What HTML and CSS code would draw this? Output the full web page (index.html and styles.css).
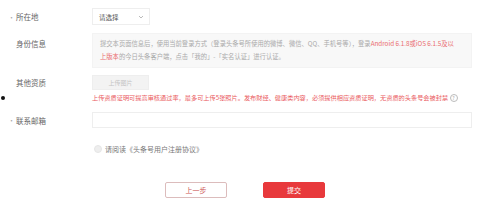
FILE: index.html
```html
<!DOCTYPE html>
<html>
<head>
  <title>头条号注册</title>
  <meta charset="UTF-8">
  <link rel="stylesheet" href="styles.css">
</head>
<body>
  <div class="form">
    <div class="row row-location">
      <div class="label"><span class="req">•</span>所在地</div>
      <div class="select">
        <span>请选择</span>
        <svg class="arrow" width="6" height="4" viewBox="0 0 6 4"><path d="M1 1 L3 3 L5 1" fill="none" stroke="#aaa" stroke-width="0.8"/></svg>
      </div>
    </div>

    <div class="row row-id">
      <div class="label"><span class="req"></span>身份信息</div>
      <div class="notice">
        <div class="line">提交本页面信息后，使用当前登录方式（登录头条号所使用的微博、微信、QQ、手机号等），登录<span class="red">Android 6.1.8或iOS 6.1.5及以</span></div>
        <div class="line"><span class="red">上版本</span>的今日头条客户端，点击「我的」-「实名认证」进行认证。</div>
      </div>
    </div>

    <div class="row row-upload">
      <div class="label"><span class="req"></span>其他资质</div>
      <button class="upload-btn">上传图片</button>
    </div>
    <div class="row row-hint">
      <div class="label label-dot"><span class="dot"></span></div>
      <div class="hint">上传资质证明可提高审核通过率，最多可上传5张照片。发布财经、健康类内容，必须提供相应资质证明，无资质的头条号会被封禁 <span class="help">?</span></div>
    </div>

    <div class="row row-email">
      <div class="label"><span class="req">•</span>联系邮箱</div>
      <div class="input"></div>
    </div>

    <div class="row row-agree">
      <div class="label"></div>
      <span class="radio"></span>
      <span class="agree-text">请阅读《头条号用户注册协议》</span>
    </div>

    <div class="actions">
      <button class="btn btn-prev">上一步</button>
      <button class="btn btn-submit">提交</button>
    </div>
  </div>
</body>
</html>
```

FILE: styles.css
```css
body {
  margin: 0;
  background: #fff;
  font-family: "Noto Sans CJK SC", "Noto Sans", sans-serif;
  color: #333;
}
.form {
  padding-top: 8px;
}
.row {
  display: flex;
  align-items: center;
}
.label {
  width: 92px;
  flex: none;
  padding-left: 8px;
  box-sizing: border-box;
  display: flex;
  align-items: center;
  font-size: 7.5px;
  color: #666;
}
.req {
  display: inline-block;
  width: 8px;
  color: #aaa;
  font-size: 7px;
}
.select {
  width: 58px;
  height: 17px;
  box-sizing: border-box;
  border: 1px solid #eee;
  display: flex;
  align-items: center;
  justify-content: space-between;
  padding: 0 5px 0 6px;
  font-size: 6.5px;
  color: #555;
}
.row-id {
  margin-top: 8px;
  align-items: flex-start;
}
.row-id .label {
  padding-top: 5px;
}
.notice {
  width: 380px;
  height: 35px;
  box-sizing: border-box;
  background: #f8f8f8;
  border: 1px solid #f3f3f3;
  padding: 3px 6px 0 7px;
  font-size: 6.3px;
  line-height: 13px;
  color: #aaa;
}
.line {
  white-space: nowrap;
}
.red {
  color: #ea6b6e;
}
.row-upload {
  margin-top: 7px;
}
.upload-btn {
  width: 57px;
  height: 15px;
  border: 1px solid #eee;
  background: #f3f3f3;
  color: #c4c4c4;
  font-family: inherit;
  font-size: 6px;
  padding: 0;
}
.row-hint {
  margin-top: 3px;
}
.label-dot {
  padding-left: 1px;
}
.dot {
  width: 4px;
  height: 4px;
  border-radius: 50%;
  background: #111;
}
.hint {
  font-size: 6.2px;
  line-height: 10px;
  color: #ea5a5e;
  white-space: nowrap;
}
.help {
  display: inline-block;
  width: 6px;
  height: 6px;
  line-height: 6px;
  border: 0.7px solid #bbb;
  border-radius: 50%;
  color: #aaa;
  font-size: 5px;
  text-align: center;
  vertical-align: middle;
}
.row-email {
  margin-top: 9px;
}
.input {
  width: 380px;
  height: 16px;
  box-sizing: border-box;
  border: 1px solid #eee;
}
.row-agree {
  margin-top: 14px;
  height: 14px;
}
.radio {
  width: 6px;
  height: 6px;
  margin-left: 2px;
  margin-right: 3px;
  border-radius: 50%;
  background: #eee;
  border: 1px solid #e6e6e6;
}
.agree-text {
  font-size: 7px;
  color: #777;
}
.actions {
  display: flex;
  gap: 36px;
  padding-left: 165px;
  margin-top: 26px;
}
.btn {
  width: 62px;
  height: 16px;
  box-sizing: border-box;
  padding: 0;
  border-radius: 2px;
  font-family: inherit;
  font-size: 7px;
}
.btn-prev {
  background: #fff;
  border: 1px solid #dcbcbc;
  color: #c55;
}
.btn-submit {
  background: #e8393c;
  border: 1px solid #e8393c;
  color: #fff;
}
```
